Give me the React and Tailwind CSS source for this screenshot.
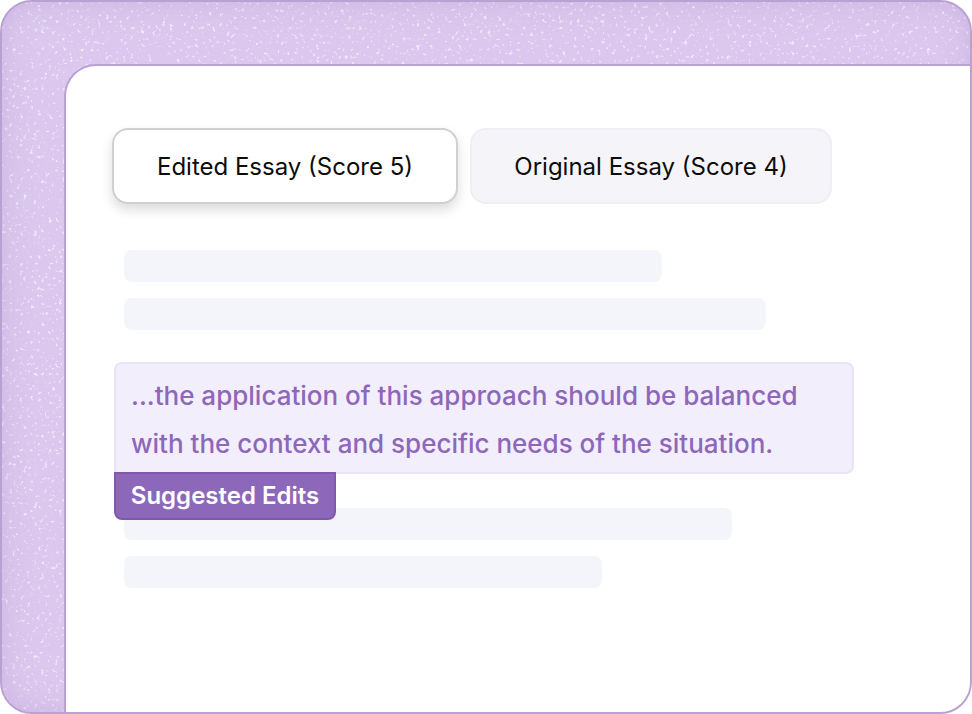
export default function App() {
  return (
    <div className="relative flex h-[714px] w-[972px] flex-col overflow-hidden rounded-[32px] border-2 border-[#b9a2d2] bg-[#dcc8ee] pl-[62px] pt-[62px] font-['Inter',sans-serif] [font-optical-sizing:none]">
      <svg className="absolute inset-0 h-full w-full" aria-hidden="true">
        <defs>
          <filter id="speckle" x="0" y="0" width="100%" height="100%">
            <feTurbulence type="fractalNoise" baseFrequency="0.28" numOctaves="2" seed="7" />
            <feColorMatrix type="matrix" values="0 0 0 0 0.92  0 0 0 0 0.86  0 0 0 0 0.97  9 0 0 0 -5.7" />
          </filter>
        </defs>
        <rect width="100%" height="100%" filter="url(#speckle)" opacity="0.8" />
      </svg>
      <div className="absolute inset-0 rounded-[30px] shadow-[inset_0_0_28px_rgba(170,140,200,0.35)]" />
      <div className="relative flex min-h-0 flex-1 flex-col rounded-tl-[32px] border-l-2 border-t-2 border-[#b9a2d2] bg-white pl-[46px] pt-[62px]">
        <div className="flex gap-3">
          <div className="flex h-[76px] w-[346px] items-center justify-center rounded-2xl border-2 border-[#d0d0d0] bg-white pt-0.5 text-2xl text-[#0c0c0c] shadow-[0_6px_12px_rgba(0,0,0,0.14)]">
            Edited Essay (Score 5)
          </div>
          <div className="flex h-[76px] w-[362px] items-center justify-center rounded-2xl border-2 border-[#eeeef4] bg-[#f4f4f9] pt-0.5 text-2xl text-[#0c0c0c]">
            Original Essay (Score 4)
          </div>
        </div>
        <div className="ml-3 mt-[46px] flex flex-col gap-4">
          <div className="h-8 w-[538px] rounded-lg bg-[#f4f5fa]" />
          <div className="h-8 w-[642px] rounded-lg bg-[#f4f5fa]" />
        </div>
        <div className="relative z-10 ml-0.5 mt-8 h-[112px] w-[740px] rounded-lg rounded-bl-none border-2 border-[#e8e3f5] bg-[#f3eefc] px-[15px] pt-2 text-[26px] font-medium leading-[48px] text-[#8d67ba]">
          ...the application of this approach should be balanced
          <br />
          with the context and specific needs of the situation.
        </div>
        <div className="relative z-20 -mt-0.5 ml-0.5 flex h-12 w-[222px] items-center justify-center rounded-b-lg border-2 border-[#8059ac] bg-[#8d67ba] text-2xl font-semibold text-white">
          Suggested Edits
        </div>
        <div className="ml-3 -mt-3 flex flex-col gap-4">
          <div className="h-8 w-[608px] rounded-lg bg-[#f4f5fa]" />
          <div className="h-8 w-[478px] rounded-lg bg-[#f4f5fa]" />
        </div>
      </div>
    </div>
  );
}
